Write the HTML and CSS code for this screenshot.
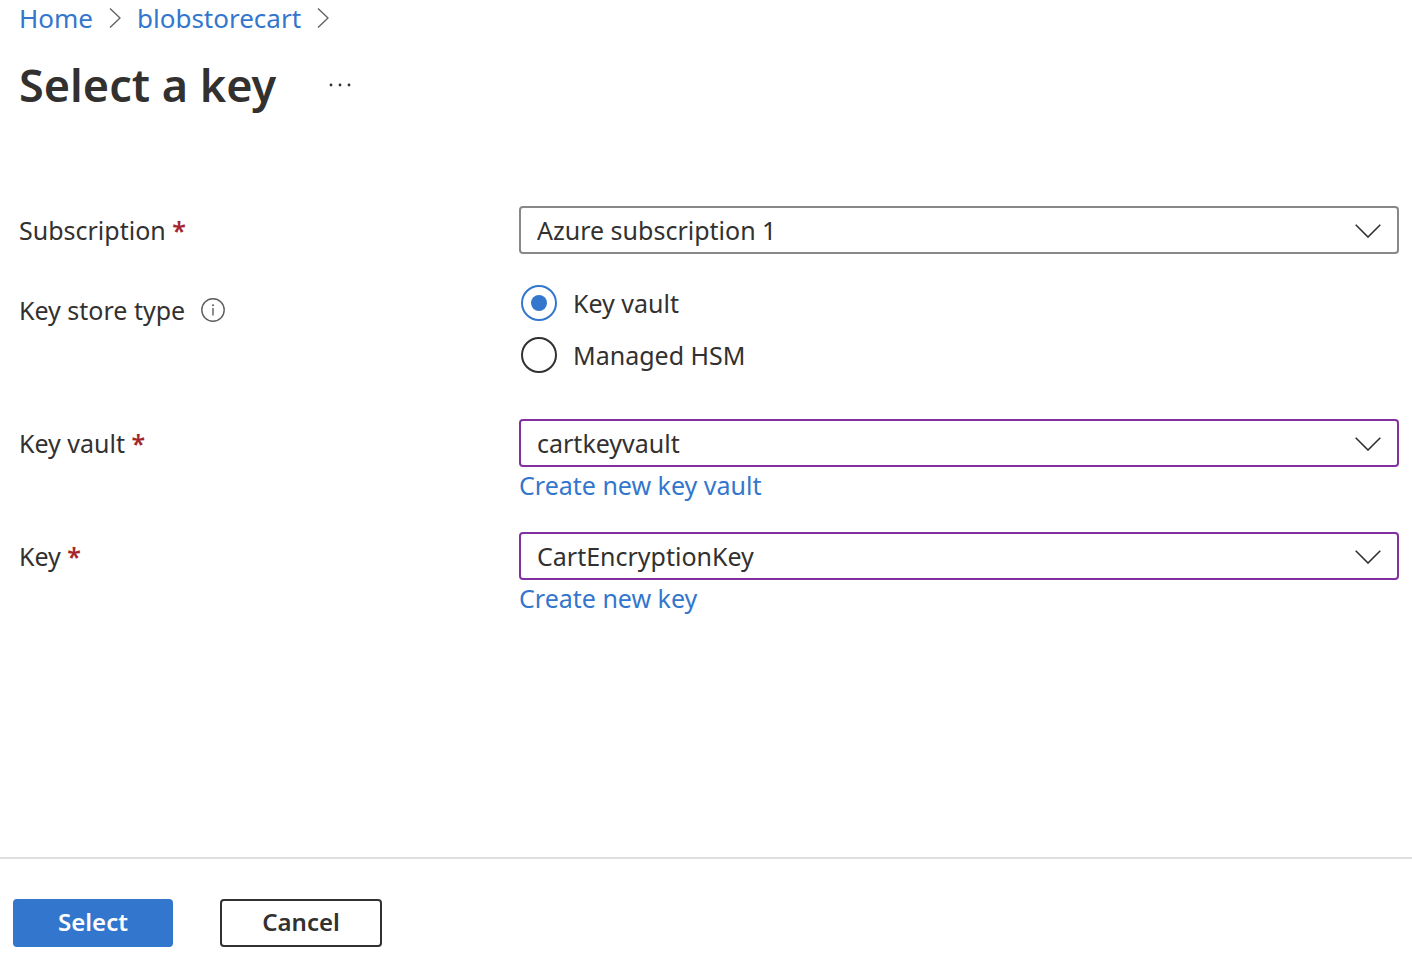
FILE: index.html
```html
<!DOCTYPE html>
<html lang="en">
<head>
<meta charset="utf-8">
<meta name="viewport" content="width=device-width, initial-scale=1">
<title>Select a key</title>
<link rel="stylesheet" href="styles.css">
</head>
<body>
<div class="page">
  <header class="header">
    <nav class="breadcrumb" aria-label="Breadcrumb">
      <a class="link" href="#">Home</a>
      <svg class="crumb-arrow" viewBox="0 0 12 20" aria-hidden="true"><path d="M1 0.5 11 10 1 19.5"/></svg>
      <a class="link" href="#">blobstorecart</a>
      <svg class="crumb-arrow" viewBox="0 0 12 20" aria-hidden="true"><path d="M1 0.5 11 10 1 19.5"/></svg>
    </nav>
    <div class="title-row">
      <h1 class="title">Select a key</h1>
      <button class="more" type="button" aria-label="More actions">
        <svg class="more-icon" viewBox="0 0 24 4" aria-hidden="true"><circle cx="3" cy="2" r="1.4"/><circle cx="12" cy="2" r="1.4"/><circle cx="21" cy="2" r="1.4"/></svg>
      </button>
    </div>
  </header>

  <form class="form" id="key-form">
    <div class="row">
      <label class="label" for="subscription">Subscription <span class="required">*</span></label>
      <div class="dropdown">
        <select class="select" id="subscription"><option>Azure subscription 1</option></select>
        <svg class="chevron" viewBox="0 0 26 16" aria-hidden="true"><path d="M0.7 2.7 13 15 25.3 2.7"/></svg>
      </div>
    </div>

    <div class="row row-radios" role="radiogroup" aria-labelledby="store-label">
      <div class="label label-info">
        <span id="store-label">Key store type</span>
        <svg class="info" viewBox="0 0 24 24" aria-hidden="true"><circle class="info-ring" cx="12" cy="12" r="11.2"/><path class="info-ring" d="M12 10v7.5"/><circle class="info-dot" cx="12" cy="7.2" r="1"/></svg>
      </div>
      <div class="radios">
        <label class="choice"><input class="radio" type="radio" name="store" checked>Key vault</label>
        <label class="choice"><input class="radio" type="radio" name="store">Managed HSM</label>
      </div>
    </div>

    <div class="row row-vault">
      <label class="label" for="vault">Key vault <span class="required">*</span></label>
      <div class="field">
        <div class="dropdown">
          <select class="select select-edited" id="vault"><option>cartkeyvault</option></select>
          <svg class="chevron" viewBox="0 0 26 16" aria-hidden="true"><path d="M0.7 2.7 13 15 25.3 2.7"/></svg>
        </div>
        <a class="link create" href="#">Create new key vault</a>
      </div>
    </div>

    <div class="row">
      <label class="label" for="key">Key <span class="required">*</span></label>
      <div class="field">
        <div class="dropdown">
          <select class="select select-edited" id="key"><option>CartEncryptionKey</option></select>
          <svg class="chevron" viewBox="0 0 26 16" aria-hidden="true"><path d="M0.7 2.7 13 15 25.3 2.7"/></svg>
        </div>
        <a class="link create" href="#">Create new key</a>
      </div>
    </div>
  </form>

  <footer class="footer">
    <button class="button button-primary" type="submit" form="key-form">Select</button>
    <button class="button" type="button">Cancel</button>
  </footer>
</div>
</body>
</html>
```
FILE: styles.css
```css
* {
  box-sizing: border-box;
}

body {
  margin: 0;
  background: #fff;
  color: #323130;
  font-family: "Noto Sans", sans-serif;
  font-size: 25px;
  line-height: 36px;
}

.page {
  display: flex;
  flex-direction: column;
  min-height: 100vh;
}

.header {
  padding: 0 19px;
}

.link {
  color: #3376cd;
  text-decoration: none;
}

.breadcrumb {
  display: flex;
  align-items: center;
  gap: 16px;
  font-size: 26px;
}

.crumb-arrow {
  width: 12px;
  height: 20px;
  fill: none;
  stroke: #605e5c;
  stroke-width: 1.3;
}

.title-row {
  display: flex;
  align-items: center;
  gap: 48px;
  margin-top: 16px;
}

.title {
  margin: 0;
  font-size: 45px;
  font-weight: 600;
  line-height: 66px;
}

.more {
  display: flex;
  padding: 4px;
  border: 0;
  background: none;
}

.more-icon {
  width: 24px;
  height: 4px;
  fill: #323130;
}

.form {
  flex: 1;
  padding: 88px 13px 32px 19px;
}

.row {
  display: grid;
  grid-template-columns: 500px minmax(0, 1fr);
  align-items: start;
}

.label {
  line-height: 48px;
}

.required {
  color: #a4262c;
  font-weight: 600;
}

.dropdown {
  display: grid;
  align-items: center;
}

.select {
  grid-area: 1 / 1;
  width: 100%;
  height: 48px;
  padding: 0 48px 0 16px;
  border: 2px solid #8a8886;
  border-radius: 4px;
  appearance: none;
  background: #fff;
  color: inherit;
  font: inherit;
}

.select-edited {
  border-color: #8230a0;
}

.chevron {
  grid-area: 1 / 1;
  justify-self: end;
  width: 26px;
  height: 16px;
  margin-right: 18px;
  fill: none;
  stroke: #323130;
  stroke-width: 1.6;
  pointer-events: none;
}

.row-radios {
  margin-top: 31px;
}

.label-info {
  display: flex;
  align-items: center;
  gap: 16px;
  line-height: 50px;
}

.info {
  width: 24px;
  height: 24px;
}

.info-ring {
  fill: none;
  stroke: #605e5c;
  stroke-width: 1.4;
}

.info-dot {
  fill: #605e5c;
}

.radios {
  display: flex;
  flex-direction: column;
  gap: 16px;
  padding-left: 2px;
}

.choice {
  display: flex;
  align-items: center;
  gap: 16px;
}

.radio {
  display: grid;
  place-items: center;
  width: 36px;
  height: 36px;
  margin: 0;
  border: 2px solid #323130;
  border-radius: 50%;
  appearance: none;
}

.radio:checked {
  border-color: #3376cd;
}

.radio:checked::before {
  content: "";
  width: 16px;
  height: 16px;
  border-radius: 50%;
  background: #3376cd;
}

.row-vault {
  margin: 46px 0 29px;
}

.create {
  display: inline-block;
}

.footer {
  display: flex;
  gap: 47px;
  padding: 40px 13px 6px;
  border-top: 2px solid #e1dfdd;
}

.button {
  min-width: 162px;
  height: 48px;
  padding: 0 24px 3px;
  border: 2px solid #323130;
  border-radius: 4px;
  background: #fff;
  color: #323130;
  font: inherit;
  font-size: 24px;
  font-weight: 600;
  line-height: 40px;
}

.button-primary {
  min-width: 160px;
  border-color: #3376cd;
  background: #3376cd;
  color: #fff;
}
```
